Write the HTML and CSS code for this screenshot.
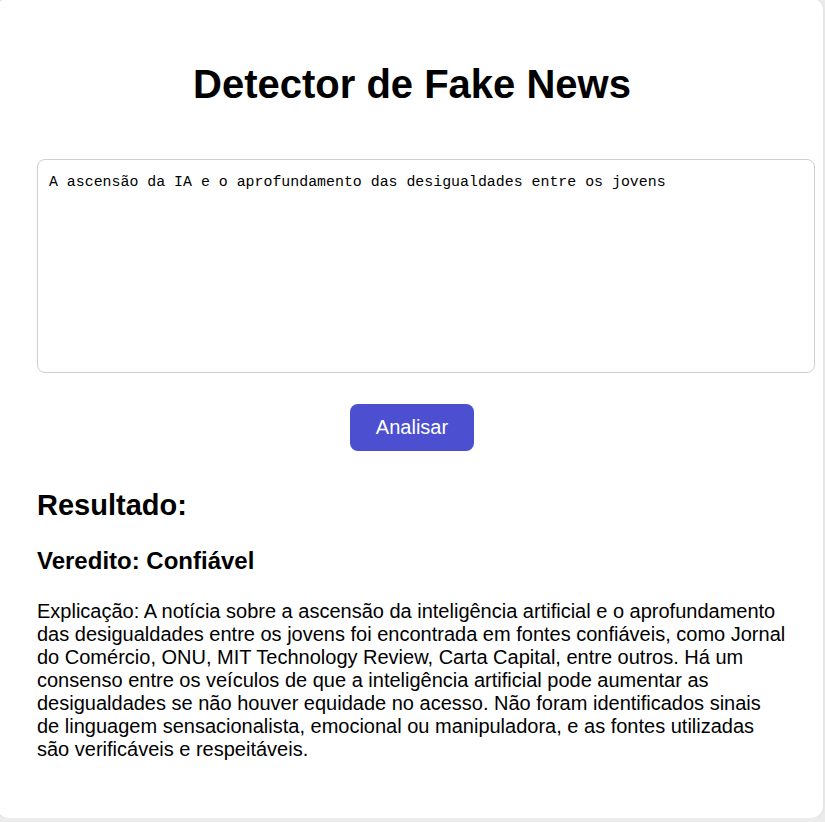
FILE: index.html
```html
<!DOCTYPE html>
<html lang="pt-BR">
<head>
<meta charset="utf-8">
<title>Detector de Fake News</title>
<link rel="stylesheet" href="styles.css">
</head>
<body>
<main class="card">
  <h1 class="title">Detector de Fake News</h1>
  <textarea class="news-input">A ascensão da IA e o aprofundamento das desigualdades entre os jovens</textarea>
  <div class="actions">
    <button class="analyze-btn" type="button">Analisar</button>
  </div>
  <section class="result">
    <h2 class="result-title">Resultado:</h2>
    <h3 class="verdict">Veredito: Confiável</h3>
    <p class="explanation">Explicação: A notícia sobre a ascensão da inteligência artificial e o aprofundamento das desigualdades entre os jovens foi encontrada em fontes confiáveis, como Jornal do Comércio, ONU, MIT Technology Review, Carta Capital, entre outros. Há um consenso entre os veículos de que a inteligência artificial pode aumentar as desigualdades se não houver equidade no acesso. Não foram identificados sinais de linguagem sensacionalista, emocional ou manipuladora, e as fontes utilizadas são verificáveis e respeitáveis.</p>
  </section>
</main>
</body>
</html>
```

FILE: styles.css
```css
html, body {
  margin: 0;
  padding: 0;
  background: #ececec;
  overflow: hidden;
}

body {
  font-family: "Liberation Sans", Arial, sans-serif;
  color: #000;
}

.card {
  box-sizing: border-box;
  width: 826px;
  height: 820px;
  margin: -2px 0 0 -3px;
  padding: 63px 0 0 40px;
  background: #fff;
  border-radius: 12px;
  box-shadow: 0 0 4px rgba(0, 0, 0, 0.08);
}

.title {
  width: 750px;
  margin: 0 0 52px;
  font-size: 40px;
  line-height: 46px;
  font-weight: bold;
  text-align: center;
}

.news-input {
  display: block;
  box-sizing: border-box;
  width: 778px;
  height: 214px;
  margin: 0;
  padding: 14px 11px 12px;
  border: 1px solid #cfcfcf;
  border-radius: 8px;
  font-family: "Liberation Mono", "DejaVu Sans Mono", monospace;
  font-size: 14.9px;
  line-height: 17px;
  color: #000;
  resize: none;
  outline: none;
}

.actions {
  width: 750px;
  display: flex;
  justify-content: center;
  margin-top: 31px;
}

.analyze-btn {
  box-sizing: border-box;
  height: 47px;
  padding: 0 26px;
  border: none;
  border-radius: 8px;
  background: #4b4fd0;
  color: #fff;
  font-family: "Liberation Sans", Arial, sans-serif;
  font-size: 20px;
  line-height: 23px;
}

.result {
  width: 750px;
  margin-top: 37px;
}

.result-title {
  margin: 0 0 25px;
  font-size: 29px;
  line-height: 34px;
  font-weight: bold;
}

.verdict {
  margin: 0 0 25px;
  font-size: 24px;
  line-height: 28px;
  font-weight: bold;
}

.explanation {
  margin: 0;
  font-size: 20px;
  line-height: 23px;
}
```
